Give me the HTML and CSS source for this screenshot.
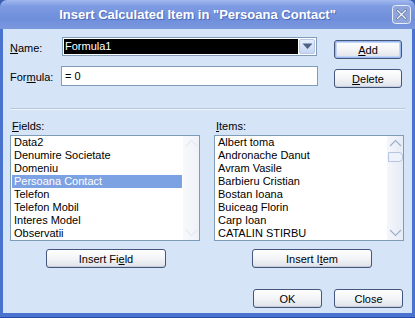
FILE: index.html
```html
<!DOCTYPE html>
<html lang="en">
<head>
    <meta charset="UTF-8">
    <title>Insert Calculated Item</title>
    <link rel="stylesheet" href="styles.css">
</head>
<body>
    <div class="window">
        <div class="titlebar">
            <span class="title">Insert Calculated Item in "Persoana Contact"</span>
            <span class="close">
                <svg width="19" height="19" viewBox="0 0 19 19">
                    <rect x="0.5" y="0.5" width="18" height="18" rx="3" fill="#8ea6dc" stroke="#e8eefa"/>
                    <path d="M5.5 5.5 L13.5 13.5 M13.5 5.5 L5.5 13.5" stroke="#5a6f9c" stroke-width="2.6" stroke-linecap="round"/>
                    <path d="M5.5 5.5 L13.5 13.5 M13.5 5.5 L5.5 13.5" stroke="#f2f5fb" stroke-width="1.4" stroke-linecap="round"/>
                </svg>
            </span>
        </div>
        <div class="client">
            <div class="top">
                <label class="lbl"><u>N</u>ame:</label>
                <div class="combo">
                    <span class="combo-text">Formula1</span>
                    <span class="combo-btn">
                        <svg width="11" height="7" viewBox="0 0 11 7"><path d="M0.5 0.5 L10.5 0.5 L5.5 6 Z" fill="#4d6185"/></svg>
                    </span>
                </div>
                <button class="btn default"><u>A</u>dd</button>

                <label class="lbl">For<u>m</u>ula:</label>
                <div class="input">= 0</div>
                <button class="btn"><u>D</u>elete</button>
            </div>

            <div class="sep"></div>

            <div class="lists">
                <div class="col">
                    <label class="lbl"><u>F</u>ields:</label>
                    <div class="listbox">
                        <ul class="rows">
                            <li>Data2</li>
                            <li>Denumire Societate</li>
                            <li>Domeniu</li>
                            <li class="sel">Persoana Contact</li>
                            <li>Telefon</li>
                            <li>Telefon Mobil</li>
                            <li>Interes Model</li>
                            <li>Observatii</li>
                        </ul>
                        <div class="scroll faint">
                            <span class="arrow up"><svg width="13" height="8" viewBox="0 0 13 8"><path d="M1 7 L6.5 1.5 L12 7" fill="none" stroke="#e3eaf6" stroke-width="1.2"/></svg></span>
                            <span class="arrow down"><svg width="13" height="8" viewBox="0 0 13 8"><path d="M1 1 L6.5 6.5 L12 1" fill="none" stroke="#e3eaf6" stroke-width="1.2"/></svg></span>
                        </div>
                    </div>
                    <button class="btn wide">Insert Fi<u>e</u>ld</button>
                </div>
                <div class="col">
                    <label class="lbl"><u>I</u>tems:</label>
                    <div class="listbox">
                        <ul class="rows">
                            <li>Albert toma</li>
                            <li>Andronache Danut</li>
                            <li>Avram Vasile</li>
                            <li>Barbieru Cristian</li>
                            <li>Bostan Ioana</li>
                            <li>Buiceag Florin</li>
                            <li>Carp Ioan</li>
                            <li>CATALIN STIRBU</li>
                        </ul>
                        <div class="scroll">
                            <span class="arrow up"><svg width="13" height="8" viewBox="0 0 13 8"><path d="M1 7 L6.5 1.5 L12 7" fill="none" stroke="#9fb0cc" stroke-width="1.2"/></svg></span>
                            <span class="thumb"></span>
                            <span class="arrow down"><svg width="13" height="8" viewBox="0 0 13 8"><path d="M1 1 L6.5 6.5 L12 1" fill="none" stroke="#9fb0cc" stroke-width="1.2"/></svg></span>
                        </div>
                    </div>
                    <button class="btn wide">Insert I<u>t</u>em</button>
                </div>
            </div>

            <div class="footer">
                <button class="btn">OK</button>
                <button class="btn">Close</button>
            </div>
        </div>
    </div>
</body>
</html>
```

FILE: styles.css
```css
* {
    margin: 0;
    padding: 0;
    box-sizing: border-box;
}
body {
    width: 415px;
    height: 318px;
    overflow: hidden;
    background: #3a5fae;
    font-family: "Liberation Sans", Tahoma, sans-serif;
    font-size: 11px;
    color: #000;
}
.window {
    width: 415px;
    height: 318px;
    display: flex;
    flex-direction: column;
    background: #4a73cf;
    border-radius: 7px 7px 0 0;
    padding: 0 3px 4px 3px;
    border-bottom: 1px solid #244aa8;
}
.titlebar {
    height: 29px;
    display: flex;
    align-items: center;
    justify-content: center;
    position: relative;
    margin: 0 -3px;
    border-radius: 7px 7px 0 0;
    background: linear-gradient(#a2b9ee 0%, #7e9be2 22%, #6f8edb 65%, #7b98df 100%);
}
.title {
    color: #fff;
    font-family: "Liberation Sans", Arial, sans-serif;
    font-weight: bold;
    font-size: 13px;
    text-shadow: 1px 1px 0 #4e6bb8;
    margin-right: 20px;
}
.close {
    position: absolute;
    right: 4px;
    top: 5px;
    display: flex;
}
.client {
    flex: 1;
    background: #d6e4f8;
    padding: 8px 7px 0 7px;
}
.top {
    display: grid;
    grid-template-columns: 35px 255px 68px;
    column-gap: 17px;
    row-gap: 7px;
    align-items: start;
}
.top .lbl {
    align-self: center;
}
.lbl {
    white-space: nowrap;
}
.combo {
    height: 19px;
    background: #fff;
    border: 1px solid #7f9db9;
    display: flex;
    padding: 1px;
}
.combo-text {
    flex: 1;
    background: #000;
    color: #fff;
    padding-left: 1px;
    line-height: 15px;
}
.combo-btn {
    width: 16px;
    margin-left: 1px;
    display: flex;
    align-items: center;
    justify-content: center;
    border: 1px solid #b9c8e6;
    border-radius: 2px;
    background: linear-gradient(#e6eefc, #c6d6f4);
}
.input {
    height: 20px;
    margin-left: -1px;
    margin-right: -1px;
    background: #fff;
    border: 1px solid #7f9db9;
    padding-left: 3px;
    line-height: 18px;
}
.btn {
    height: 19px;
    font-family: inherit;
    font-size: inherit;
    color: #000;
    border: 1px solid #44567a;
    border-radius: 3px;
    background: linear-gradient(#ffffff 0%, #f3f4f6 50%, #dde1e9 100%);
    box-shadow: inset 0 -1px 0 #c8ced9;
    margin-top: 3px;
}
.btn.default {
    box-shadow: inset 0 0 0 1px #9ab9f0, inset 0 0 0 2px #c4d6f8;
}
.sep {
    height: 2px;
    margin: 20px 0 10px 0;
    border-top: 1px solid #b8c7de;
    border-bottom: 1px solid #eef3fc;
}
.lists {
    display: flex;
    gap: 14px;
}
.col {
    width: 190px;
    display: flex;
    flex-direction: column;
    align-items: center;
}
.col .lbl {
    align-self: flex-start;
    padding-left: 2px;
    height: 15px;
    line-height: 13px;
}
.listbox {
    width: 190px;
    height: 106px;
    border: 1px solid #7f9db9;
    background: #fff;
    display: flex;
}
.rows {
    list-style: none;
    flex: 1;
    padding: 0 1px;
}
.rows li {
    height: 13px;
    line-height: 13px;
    padding-left: 2px;
    white-space: nowrap;
}
.rows li.sel {
    background: #7da2e4;
    color: #fff;
}
.scroll {
    width: 16px;
    display: flex;
    flex-direction: column;
    align-items: center;
    background: linear-gradient(90deg, #f4f6fa, #e6ecf6);
}
.scroll.faint {
    background: linear-gradient(90deg, #f8f9fb, #eef2f8);
}
.arrow {
    height: 14px;
    display: flex;
    align-items: center;
}
.arrow.down {
    margin-top: auto;
}
.thumb {
    width: 15px;
    height: 10px;
    margin-top: 2px;
    border: 1px solid #b7c5de;
    border-radius: 0 4px 4px 0;
    background: #eef2fa;
}
.btn.wide {
    width: 120px;
    margin-top: 8px;
}
.col:first-child .btn.wide {
    margin-left: 2px;
}
.col:last-child .btn.wide {
    margin-left: 6px;
}
.footer {
    display: flex;
    justify-content: flex-end;
    gap: 12px;
    margin-top: 21px;
    padding-right: 2px;
}
.footer .btn {
    width: 69px;
    margin-top: 0;
}
```
